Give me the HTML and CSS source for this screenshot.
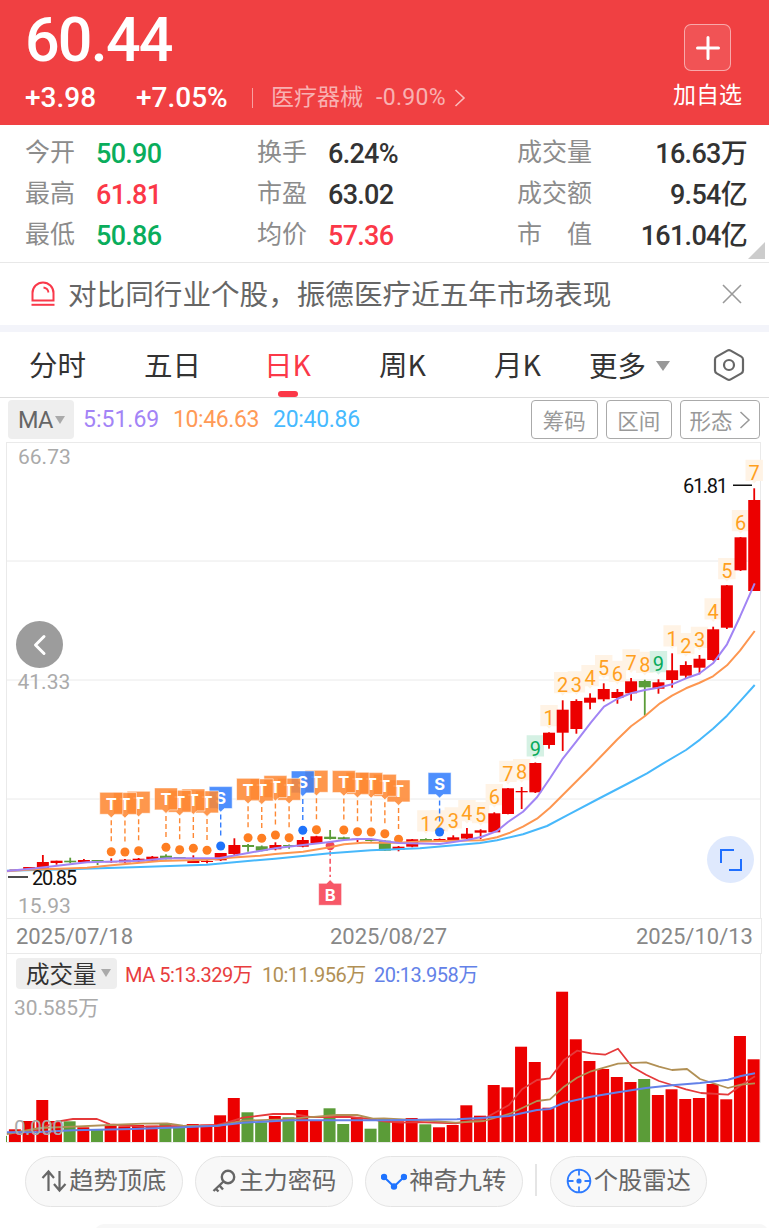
FILE: index.html
```html
<!DOCTYPE html>
<html lang="zh-CN">
<head>
    <meta charset="UTF-8">
    <meta name="viewport" content="width=device-width, initial-scale=1.0">
    <title>振德医疗 日K</title>
    <link rel="stylesheet" href="styles.css">
</head>
<body>
    <header class="quote">
        <div class="quote-main">
            <div class="price">60.44</div>
            <div class="change">
                <span class="change-value">+3.98</span>
                <span class="change-percent">+7.05%</span>
                <span class="divider"></span>
                <span class="sector">医疗器械</span>
                <span class="sector-change">-0.90%</span>
                <svg class="sector-arrow" width="12" height="20" viewBox="0 0 12 20" fill="none" stroke="currentColor" stroke-width="1.6">
                    <polyline points="1.5 2 10 10 1.5 18"></polyline>
                </svg>
            </div>
        </div>
        <div class="favorite">
            <button class="add-btn">
                <svg width="26" height="26" viewBox="0 0 26 26" fill="none" stroke="#fff" stroke-width="3" stroke-linecap="round">
                    <path d="M13 2.5v21M2.5 13h21"></path>
                </svg>
            </button>
            <span>加自选</span>
        </div>
    </header>

    <section class="stats">
        <dl class="stats-col col-a">
            <dt>今开</dt><dd class="down">50.90</dd>
            <dt>最高</dt><dd class="up">61.81</dd>
            <dt>最低</dt><dd class="down">50.86</dd>
        </dl>
        <dl class="stats-col col-b">
            <dt>换手</dt><dd>6.24%</dd>
            <dt>市盈</dt><dd>63.02</dd>
            <dt>均价</dt><dd class="up">57.36</dd>
        </dl>
        <dl class="stats-col col-c">
            <dt>成交量</dt><dd>16.63万</dd>
            <dt>成交额</dt><dd>9.54亿</dd>
            <dt>市　值</dt><dd>161.04亿</dd>
        </dl>
        <span class="corner"></span>
    </section>

    <section class="notice">
        <svg width="24" height="26" viewBox="0 0 24 26" fill="none" stroke="#f9394a" stroke-width="2">
            <path d="M1.5 19.5V12a10.5 10.5 0 0 1 21 0v7.5z"></path>
            <path d="M12.5 6.5a6 6 0 0 1 5 5" stroke-width="1.8"></path>
            <path d="M.5 23.8h23"></path>
        </svg>
        <p>对比同行业个股，振德医疗近五年市场表现</p>
        <svg class="close" width="20" height="20" viewBox="0 0 20 20" fill="none" stroke="#999" stroke-width="1.6">
            <path d="M1 1l18 18M19 1L1 19"></path>
        </svg>
    </section>

    <nav class="tabs">
        <a class="tab">分时</a>
        <a class="tab">五日</a>
        <a class="tab active">日K</a>
        <a class="tab">周K</a>
        <a class="tab">月K</a>
        <a class="tab more">更多<i class="caret"></i></a>
        <svg class="settings" width="32" height="34" viewBox="0 0 32 34" fill="none" stroke="#666" stroke-width="2.2" stroke-linejoin="round">
            <path d="M14.3 2.6Q16 1.6 17.7 2.6L28.3 8.6Q30 9.6 30 11.5V22.5Q30 24.4 28.3 25.4L17.7 31.4Q16 32.4 14.3 31.4L3.7 25.4Q2 24.4 2 22.5V11.5Q2 9.6 3.7 8.6Z"></path>
            <circle cx="16" cy="17" r="5"></circle>
        </svg>
    </nav>

    <div class="indicator">
        <button class="select">MA<i class="caret"></i></button>
        <span class="ma5">5:51.69</span>
        <span class="ma10">10:46.63</span>
        <span class="ma20">20:40.86</span>
        <div class="tools">
            <button>筹码</button>
            <button>区间</button>
            <button class="wide">形态<svg width="12" height="20" viewBox="0 0 12 20" fill="none" stroke="currentColor" stroke-width="1.5"><polyline points="1.5 2 10 10 1.5 18"></polyline></svg></button>
        </div>
    </div>

    <div class="kline">
        <svg id="kline" width="769" height="476" viewBox="0 442 769 476"></svg>
        <button class="round-btn prev">
            <svg width="14" height="22" viewBox="0 0 14 22" fill="none" stroke="#fff" stroke-width="3" stroke-linecap="round" stroke-linejoin="round">
                <polyline points="11 2.5 2.5 11 11 19.5"></polyline>
            </svg>
        </button>
        <button class="round-btn expand">
            <svg width="24" height="24" viewBox="0 0 24 24" fill="none" stroke="#1f6fff" stroke-width="2">
                <path d="M2 15V2h13M22 11v11H10"></path>
            </svg>
        </button>
    </div>
    <div class="dates">
        <span>2025/07/18</span>
        <span>2025/08/27</span>
        <span>2025/10/13</span>
    </div>

    <div class="volume-head">
        <button class="select">成交量<i class="caret"></i></button>
        <span class="vol5">MA 5:13.329万</span>
        <span class="vol10">10:11.956万</span>
        <span class="vol20">20:13.958万</span>
    </div>
    <svg id="volume" width="769" height="154" viewBox="0 989 769 154"></svg>

    <div class="pills">
        <button class="pill">
            <svg width="26" height="24" viewBox="0 0 26 24" fill="none" stroke="#666" stroke-width="2.2">
                <path d="M7.5 22V3M1.5 9l6-6.5L13 9M18.5 2v19M13 15l5.5 6.5 6-6.5"></path>
            </svg>趋势顶底
        </button>
        <button class="pill">
            <svg width="26" height="24" viewBox="0 0 26 24" fill="none" stroke="#666" stroke-width="2.4">
                <circle cx="17" cy="8" r="6.2"></circle>
                <path d="M12.5 12.5L2.5 22M8.5 16.5l3.5 4M4.5 19.500l3 3"></path>
            </svg>主力密码
        </button>
        <button class="pill">
            <svg width="26" height="24" viewBox="0 0 26 24" fill="#1f73ff" stroke="#1f73ff" stroke-width="2">
                <path d="M3 8l10 9.5L23 8" fill="none"></path>
                <circle cx="3" cy="8" r="2.2"></circle>
                <circle cx="13" cy="17.5" r="2.2"></circle>
                <circle cx="23" cy="8" r="2.2"></circle>
            </svg>神奇九转
        </button>
        <span class="pill-divider"></span>
        <button class="pill">
            <svg width="26" height="26" viewBox="0 0 26 26" fill="none" stroke="#2e7bff" stroke-width="1.8">
                <circle cx="13" cy="13" r="11.4"></circle>
                <circle cx="13" cy="13" r="1.7" fill="#2e7bff"></circle>
                <path d="M13 1.5v6M13 18.5v6M1.5 13h6M18.5 13h6"></path>
            </svg>个股雷达
        </button>
    </div>
    <div class="next-card"></div>

    <script src="chart.js"></script>
</body>
</html>
```
FILE: styles.css
```css
* {
    margin: 0;
    padding: 0;
    box-sizing: border-box;
}

body {
    width: 769px;
    height: 1228px;
    overflow: hidden;
    background-color: #fff;
    color: #333;
    font-family: Roboto, "Noto Sans CJK SC", sans-serif;
}

button {
    font: inherit;
    color: inherit;
    border: none;
    background: none;
}

svg {
    display: block;
    flex-shrink: 0;
}

/* header */
.quote {
    display: flex;
    justify-content: space-between;
    height: 125px;
    padding: 0 27px 0 25px;
    background-color: #f04042;
    color: #fff;
}

.price {
    height: 80px;
    line-height: 81px;
    font-size: 61px;
    font-weight: 500;
    letter-spacing: -1.8px;
}

.change {
    display: flex;
    align-items: center;
    height: 35px;
    font-size: 28px;
    font-weight: 500;
    line-height: 35px;
    white-space: nowrap;
}

.change-value {
    width: 111px;
}

.change-percent {
    width: 116px;
}

.divider {
    width: 1px;
    height: 20px;
    margin-right: 18px;
    background-color: rgba(255, 255, 255, 0.5);
}

.sector,
.sector-change {
    font-size: 23px;
    font-weight: 400;
    color: rgba(255, 255, 255, 0.6);
}

.sector-change {
    margin-left: 13px;
    letter-spacing: 0.3px;
}

.sector-arrow {
    margin-left: 8px;
    color: rgba(255, 255, 255, 0.65);
}

.favorite {
    display: flex;
    flex-direction: column;
    align-items: center;
    padding-top: 24px;
    font-size: 23px;
    line-height: 50px;
}

.add-btn {
    display: flex;
    align-items: center;
    justify-content: center;
    width: 47px;
    height: 47px;
    border: 1px solid rgba(255, 255, 255, 0.5);
    border-radius: 7px;
    background-color: rgba(255, 255, 255, 0.1);
}

/* stats */
.stats {
    position: relative;
    display: flex;
    height: 138px;
    padding: 8px 22px 0 25px;
    border-bottom: 1px solid #e8e8e8;
}

.stats-col {
    display: grid;
    grid-template-columns: 71px 1fr;
    grid-auto-rows: 41px;
    line-height: 40px;
}

.col-a {
    width: 232px;
}

.col-b {
    width: 260px;
}

.col-c {
    flex: 1;
    grid-template-columns: 76px 1fr;
}

.stats-col dt {
    font-size: 25px;
    color: #8c8c8c;
    white-space: nowrap;
}

.stats-col dd {
    padding-top: 1px;
    font-size: 27px;
    font-weight: 500;
    letter-spacing: -0.7px;
    white-space: nowrap;
}

.col-c dd {
    text-align: right;
}

.stats-col .up {
    color: #fb3848;
}

.stats-col .down {
    color: #0aad5c;
}

.corner {
    position: absolute;
    right: 4px;
    bottom: 3px;
    border-left: 17px solid transparent;
    border-bottom: 17px solid #ccc;
}

/* notice */
.notice {
    display: flex;
    align-items: center;
    height: 69px;
    padding: 0 27px 0 31px;
    border-bottom: 7px solid #f3f4fa;
}

.notice p {
    flex: 1;
    margin-left: 13px;
    padding-top: 2px;
    font-size: 28.6px;
    line-height: 58px;
    color: #666;
    white-space: nowrap;
}

/* tabs */
.tabs {
    display: flex;
    align-items: center;
    height: 66px;
    padding-right: 24px;
    border-bottom: 1px solid #ddd;
    font-family: "Noto Sans CJK SC", sans-serif;
}

.tab {
    position: relative;
    width: 115px;
    height: 65px;
    font-size: 28.5px;
    line-height: 64px;
    text-align: center;
    white-space: nowrap;
}

.tab.active {
    color: #fb3848;
}

.tab.active::after {
    content: "";
    position: absolute;
    left: 48px;
    bottom: 0;
    width: 20px;
    height: 6px;
    border-radius: 3px;
    background-color: #fb3848;
}

.tab.more {
    display: flex;
    align-items: center;
    padding-left: 14px;
}

.caret {
    border: 5px solid transparent;
    border-top: 7px solid #aaa;
    border-bottom: 0;
}

.more .caret {
    margin: 2px 0 0 10px;
    border-width: 10px 7.5px 0;
    border-top-color: #999;
}

.settings {
    margin-left: auto;
}

/* indicator values */
.indicator {
    display: flex;
    align-items: center;
    height: 44px;
    padding: 0 9px 1px 8px;
    font-size: 23px;
    white-space: nowrap;
}

.select {
    display: flex;
    align-items: center;
    border-radius: 4px;
    background-color: #eee;
}

.indicator .select {
    width: 66px;
    height: 39px;
    padding-left: 10px;
    font-size: 23.5px;
    letter-spacing: -0.7px;
    color: #666;
}

.indicator .caret {
    margin-left: 2px;
    border-width: 8px 5px 0;
}

.ma5 {
    width: 90px;
    margin-left: 9px;
    color: #a384f6;
}

.ma10 {
    width: 100px;
    letter-spacing: -0.4px;
    color: #ff9a56;
}

.ma20 {
    letter-spacing: -0.3px;
    color: #47baff;
}

.tools {
    display: flex;
    gap: 8px;
    margin-left: auto;
}

.tools button {
    display: flex;
    align-items: center;
    justify-content: center;
    gap: 6px;
    width: 66.5px;
    height: 39px;
    border: 1px solid #aaa;
    border-radius: 4px;
    font-size: 21.5px;
    color: #999;
}

.tools .wide {
    width: 80px;
}

/* candles */
.kline {
    position: relative;
    height: 476px;
}

.round-btn {
    position: absolute;
    display: flex;
    align-items: center;
    justify-content: center;
    width: 47px;
    height: 47px;
    border-radius: 50%;
}

.prev {
    left: 16px;
    top: 179px;
    background-color: #9c9c9c;
}

.expand {
    left: 707px;
    top: 394px;
    background-color: #dfe9fd;
}

.axis-label {
    font-size: 21px;
    fill: #aaa;
}

.limit-label {
    font-size: 20px;
    fill: #111;
}

.mark-text {
    font-family: Inter, sans-serif;
    font-size: 16.5px;
    font-weight: 700;
    fill: #fff;
    text-anchor: middle;
}

.turn-text {
    font-size: 20px;
    text-anchor: middle;
}

.dates {
    display: flex;
    justify-content: space-between;
    height: 36px;
    margin: 0 7px 0 6px;
    padding: 0 8px 0 9px;
    border: 1px solid #eaeaea;
    font-size: 22px;
    line-height: 36px;
    color: #888;
}

.dates span:nth-child(2) {
    margin-left: 8px;
}

/* volume */
.volume-head {
    display: flex;
    align-items: center;
    height: 35px;
    margin: 0 8px 0 6px;
    padding: 3px 0 0 9px;
    border: solid #eaeaea;
    border-width: 0 1px;
    font-size: 20px;
    letter-spacing: -0.5px;
    white-space: nowrap;
}

.volume-head .select {
    width: 101px;
    height: 31px;
    padding-left: 10px;
    font-size: 23.5px;
    letter-spacing: 0;
}

.volume-head .caret {
    margin-left: 4px;
    border-width: 8px 5px 0;
}

.vol5 {
    width: 137px;
    margin-left: 8px;
    color: #e83d3e;
}

.vol10 {
    width: 112px;
    color: #b19055;
}

.vol20 {
    color: #6381e8;
}

/* bottom buttons */
.pills {
    display: flex;
    align-items: center;
    height: 81px;
    padding: 0 0 5px 25px;
    gap: 12.5px;
}

.pill {
    display: flex;
    align-items: center;
    justify-content: center;
    gap: 2px;
    width: 157.5px;
    height: 51px;
    border: 1px solid #e4e4e4;
    border-radius: 26px;
    background-color: #f8f8f8;
    font-size: 24.3px;
    line-height: 48px;
    color: #666;
    white-space: nowrap;
}

.pill-divider {
    width: 2px;
    height: 32px;
    margin-top: -2px;
    background-color: #e5e5e5;
}

.next-card {
    height: 20px;
    margin: 0 0 0 94px;
    border-radius: 12px;
    background-color: #f7f7f7;
}
```
FILE: chart.js
```js
const RED = '#ec0000';
const GREEN = '#5b9c38';
const STEP = 13.68;

// [up, top, bottom, high, low]
const candles = [
    [1, 869.5, 870.5, 869.5, 870.5], [1, 867, 870, 867, 870], [1, 862, 869.3, 855, 869.3],
    [1, 860.7, 863, 860.7, 864.7], [0, 860.7, 862.3, 857.7, 863.3], [1, 860, 862.3, 859, 862.3],
    [0, 860, 861.3, 860, 865], [1, 861, 862.3, 858.3, 862.7], [1, 859.7, 862.3, 859, 862.7],
    [1, 858.7, 861.3, 858, 862], [1, 856.7, 860.7, 856, 862], [0, 855.7, 859.3, 854.3, 859.3],
    [0, 857, 858.7, 857, 859], [1, 860.3, 863, 855.3, 863], [1, 861, 862, 858, 863.3],
    [1, 853, 860.3, 853, 861], [1, 845, 854, 838.3, 855.7], [0, 845, 847, 844, 851.7],
    [0, 846.3, 850.7, 845.5, 851.3], [1, 845, 849.3, 842.3, 850.3], [0, 845, 846.3, 844.5, 848.7],
    [1, 840, 846.7, 837, 847.3], [1, 836.3, 843, 835.8, 843], [0, 836.7, 839, 830, 839.5],
    [0, 837.3, 839.3, 836.7, 841], [1, 838.7, 840, 838, 842], [0, 839, 841, 838.5, 841.5],
    [0, 840.7, 850.7, 840.3, 851], [1, 846.7, 850, 846, 851.3], [1, 839.3, 846.7, 839, 847.3],
    [0, 839, 841, 838.3, 841], [1, 839, 840.7, 838.5, 841], [1, 837.3, 840.3, 835.3, 840.3],
    [1, 833.7, 838.6, 828, 839], [1, 830.3, 832.7, 829.3, 839.3], [1, 813.3, 832.3, 812.3, 832.3],
    [1, 788.3, 814, 788, 814.3], [1, 791, 792.3, 787, 809], [1, 763, 792.3, 762.5, 793],
    [1, 732.7, 745, 732.3, 748.7], [1, 709.7, 732.7, 700.3, 751], [1, 701, 729, 699.3, 733.7],
    [1, 697.7, 702.7, 693.3, 709.3], [1, 689, 699.3, 683.3, 701.3], [1, 692, 698, 689, 703.7],
    [1, 681.3, 693.3, 678, 700.7], [0, 681, 687.3, 679.7, 715.7], [1, 682.3, 688.7, 679.3, 693.7],
    [1, 670.3, 680, 653.3, 687.7], [1, 665, 675.7, 661.3, 679], [1, 658.7, 667.7, 655, 674.3],
    [1, 629.3, 660, 626.7, 660.7], [1, 585.3, 627.7, 585, 629], [1, 537.3, 570.3, 537, 571],
    [1, 500, 591, 488.3, 591]
];

const ma5 = '7,871 33,868.5 53,866.3 87,862.3 125,861.3 140,860.7 167,858.3 207,858.3 220,858 233,855.7 248,853 275,848.3 303,845 330,842 344,840 358,839 371,839 385,841.3 399,843 440,844 467,840 482,836.7 497,831 508,822 523,811.7 537,797.3 550,778.3 563,758.3 577,740.7 591,722.3 604,706.7 617,699 631,693.3 645,690 658,687.7 672,684.3 686,678.3 699,673.7 713,663.3 727,644.3 740,616.7 754.7,583.3';
const ma10 = '7,871.3 27,869.7 67,868.6 87,867.7 117,864.7 160,860.9 207,859.7 233,857.6 260,855.7 275,854 303,851.7 330,847.3 344,844.3 363,842.7 399,842.7 420,841.5 482,840.3 497,837.3 510,832.7 523,826.7 537,818.7 550,807.7 563,794.7 590,767.7 604,753.3 617,739.7 631,726.3 645,716 660,703.3 672,695.7 686,688.3 699,683 713,676.3 727,665.3 740,650.7 754.7,631';
const ma20 = '7,870.7 67,869.3 133,867.3 207,864.7 260,860 275,858.7 330,853.3 371,850.3 420,848.3 480,843 497,840.3 523,834.3 547,826 567,815.3 600,798 627,784 647,773.3 660,765.3 686,750 700,739.6 713,728.7 727,715.7 740,701.3 754.7,685';

// [type, candle index, dot y]
const marks = [
    ['T', 7, 851.7], ['T', 8, 852], ['T', 9, 850.7], ['T', 11, 847.3], ['T', 12, 849.7],
    ['T', 13, 848.3], ['T', 14, 850.3], ['S', 15, 846], ['T', 17, 837.7], ['T', 18, 838.3],
    ['T', 19, 835], ['T', 20, 837.7], ['S', 21, 830.3], ['T', 22, 829.7], ['B', 23, 845.7],
    ['T', 24, 830], ['T', 25, 831.7], ['T', 26, 832], ['T', 27, 833.7], ['T', 28, 839.3],
    ['S', 31, 832]
];
const markColors = { T: ['#fe8833', '#fe7e22'], S: ['#347efd', '#1f73fb'], B: ['#f63f51', '#f04458'] };

// nine-turn counters: [candle index, number, top]
const turns = [
    [30, 1, 810.3], [31, 2, 810.3], [32, 3, 807.3], [33, 4, 800], [34, 5, 802], [35, 6, 784],
    [36, 7, 760.7], [37, 8, 759], [38, 9, 735.3], [39, 1, 705], [40, 2, 672], [41, 3, 671.3],
    [42, 4, 665], [43, 5, 655], [44, 6, 660.7], [45, 7, 649.3], [46, 8, 651.7], [47, 9, 651],
    [48, 1, 625.3], [49, 2, 633], [50, 3, 626.7], [51, 4, 598.3], [52, 5, 558], [53, 6, 510],
    [54, 7, 459.7]
];

const volumes = [
    1129.3, 1121, 1100, 1121, 1121.3, 1127.3, 1130, 1125.7, 1126.3, 1125, 1125.7,
    1123, 1126.7, 1124, 1124.7, 1115.3, 1098, 1112.3, 1122.3, 1116, 1117.3, 1110,
    1121, 1108.3, 1124, 1117.7, 1128.7, 1118, 1121.3, 1118, 1124.3, 1127.3, 1125,
    1105.3, 1115.7, 1085, 1087.3, 1046.7, 1062, 1107.7, 991.7, 1039.3, 1061, 1069,
    1077, 1082, 1079, 1095, 1089.3, 1099, 1098, 1084, 1099.3, 1036, 1059.3
];

const vol5 = '7,1133 25,1132 37,1130 57,1121.7 73,1119 97,1119 110,1124.3 143,1126.7 183,1126 217,1125 230,1121.7 243,1117.7 273,1114 293,1114 310,1117 350,1117 370,1119 384,1121.3 401,1122.7 417,1122 456,1123.3 484,1118.7 509,1105 522,1089.3 537,1080 550,1078.3 564,1060 577,1050.7 591,1053.3 605,1054.7 618,1048.7 632,1066.7 646,1074.7 659,1081 672,1085 686,1089.3 701,1093 728,1094.7 741,1085.3 755,1076.3';
const vol10 = '7,1134 40,1128 73,1126.7 110,1125 143,1123.7 167,1123.3 183,1125.7 217,1126 243,1120.7 283,1119.3 317,1116.7 337,1115 357,1115 373,1118.7 384,1118.3 427,1120.7 456,1122.7 484,1121 511,1113.3 537,1101 550,1099.3 564,1086.7 577,1077.7 591,1071.3 618,1063.7 646,1062.3 659,1066.7 672,1070 687,1069 700,1079 728,1088 741,1084.7 755,1083.3';
const vol20 = '7,1132.3 40,1132 73,1130.3 133,1129 183,1127.3 217,1125.7 243,1122.7 290,1120.3 384,1120.3 457,1119.3 484,1117.7 509,1116 537,1110 550,1109 564,1102.7 591,1096.7 618,1092.3 646,1088 672,1085.3 700,1083 728,1079.7 741,1076 755,1073.3';

function line(points, color, width) {
    return `<polyline points="${points}" fill="none" stroke="${color}" stroke-width="${width}" stroke-linejoin="round"/>`;
}

function drawKline() {
    let out = '<path d="M6.5 442V918M760.5 442V918M6 442.5H761M6 561H761M6 680H761M6 799H761" stroke="#eaeaea" fill="none"/>';
    const cx = i => 15.5 + STEP * i;

    turns.forEach(([i, n, top]) => {
        const x = cx(i);
        const bg = n === 9 ? '#d5f1e4' : '#fff3e5';
        out += `<path d="M${x - 8.7} ${top}h17.4v21.3h-6.5l-2.2 2.4l-2.2-2.4h-6.5z" fill="${bg}"/>`;
        out += `<text class="turn-text" x="${x}" y="${top + 20.3}" fill="${n === 9 ? '#08aa5b' : '#ffa01e'}">${n}</text>`;
    });

    candles.forEach(([up, top, bottom, high, low], i) => {
        const color = up ? RED : GREEN;
        const x = cx(i);
        out += `<rect x="${x - 6}" y="${top}" width="12" height="${bottom - top}" fill="${color}"/>`;
        out += `<rect x="${x - 0.9}" y="${high}" width="1.8" height="${low - high}" fill="${color}"/>`;
    });

    // older marks sit on top of newer ones
    marks.slice().reverse().forEach(([type, i, y]) => {
        const x = cx(i);
        const [fill, dot] = markColors[type];
        const below = type === 'B';
        const top = below ? 883.3 : y - 59.4;
        const from = below ? y + 5 : top + 28;
        const to = below ? 877 : y - 8;
        out += `<line x1="${x}" y1="${from}" x2="${x}" y2="${to}" stroke="${fill}" stroke-width="1.4" stroke-dasharray="5 3"/>`;
        out += `<circle cx="${x}" cy="${y}" r="4.5" fill="${dot}"/>`;
        const tip = below
            ? `M${x - 11.5} ${top}h8l3.5-3.5l3.5 3.5h8v22h-23z`
            : `M${x - 11.5} ${top}h23v22h-8l-3.5 3.5l-3.5-3.5h-8z`;
        out += `<path d="${tip}" fill="${fill}" fill-opacity="0.87" stroke="#fff" stroke-opacity="0.7" stroke-width="0.8"/>`;
        out += `<text class="mark-text" x="${x}" y="${top + 17.2}">${type}</text>`;
    });

    out += line(ma20, '#47b8fb', 2) + line(ma10, '#fd9650', 2) + line(ma5, '#a184f4', 2);
    out += '<path d="M8 877H28M733 485.3H752" stroke="#111" stroke-width="1.6"/>';
    out += '<text class="limit-label" x="32" y="885" textLength="45">20.85</text>';
    out += '<text class="limit-label" x="683" y="492.5" textLength="45">61.81</text>';
    out += '<text class="axis-label" x="18" y="464">66.73</text>';
    out += '<text class="axis-label" x="17.5" y="689">41.33</text>';
    out += '<text class="axis-label" x="18" y="913">15.93</text>';
    document.getElementById('kline').innerHTML = out;
}

function drawVolume() {
    let out = '<path d="M6.5 989V1142.5H760.5V989" stroke="#eaeaea" fill="none"/>';
    out += `<rect x="6" y="1136" width="1" height="6" fill="${GREEN}"/>`;
    volumes.forEach((top, i) => {
        out += `<rect x="${8.9 + STEP * i}" y="${top}" width="12" height="${1142 - top}" fill="${candles[i][0] ? RED : GREEN}"/>`;
    });
    out += line(vol5, '#e53a3b', 1.8) + line(vol10, '#b19055', 1.8) + line(vol20, '#6381e8', 2);
    out += '<text class="axis-label" x="14" y="1015" textLength="85">30.585万</text>';
    out += '<text class="axis-label" x="14" y="1135" textLength="50">0.000</text>';
    document.getElementById('volume').innerHTML = out;
}

drawKline();
drawVolume();
```
